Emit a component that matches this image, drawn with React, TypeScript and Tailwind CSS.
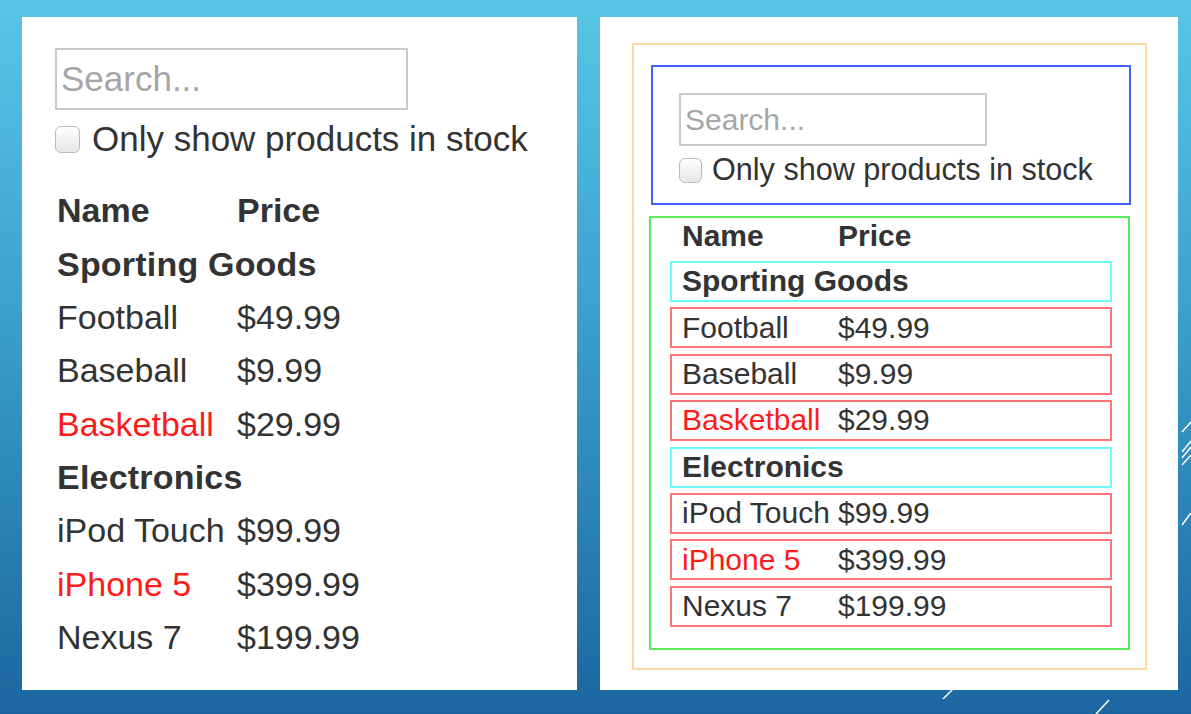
import React from "react";

type Product = { name: string; price: string; stocked: boolean };
type Group = { category: string; items: Product[] };

const groups: Group[] = [
    {
        category: "Sporting Goods",
        items: [
            { name: "Football", price: "$49.99", stocked: true },
            { name: "Baseball", price: "$9.99", stocked: true },
            { name: "Basketball", price: "$29.99", stocked: false },
        ],
    },
    {
        category: "Electronics",
        items: [
            { name: "iPod Touch", price: "$99.99", stocked: true },
            { name: "iPhone 5", price: "$399.99", stocked: false },
            { name: "Nexus 7", price: "$199.99", stocked: true },
        ],
    },
];

const font = { fontFamily: '"Liberation Sans", Arial, sans-serif' };

function Checkbox({ size }: { size: "lg" | "sm" }) {
    return (
        <div
            className={
                size === "lg"
                    ? "w-[25px] h-[27px] rounded-[6px] border border-[#b9b9b9] bg-[linear-gradient(to_bottom,#ffffff,#e6e6e6)] shadow-[inset_0_1px_1px_rgba(255,255,255,0.8)]"
                    : "w-[23px] h-[25px] rounded-[6px] border border-[#b9b9b9] bg-[linear-gradient(to_bottom,#ffffff,#e6e6e6)] shadow-[inset_0_1px_1px_rgba(255,255,255,0.8)]"
            }
        />
    );
}

function PlainPanel() {
    return (
        <div className="w-[555px] h-[673px] bg-white pl-[33px] pt-[31px] text-[#333]">
            <input
                readOnly
                placeholder="Search..."
                className="block w-[353px] h-[62px] border-2 border-[#c9c9c9] pl-[4px] text-[35px] outline-none placeholder:text-[#a6a6a6]"
                style={font}
            />
            <div className="mt-[14px] h-[30px] flex items-center gap-[12px]">
                <Checkbox size="lg" />
                <span className="text-[35px] leading-none -mt-[2px]">Only show products in stock</span>
            </div>
            <div className="mt-[30px] pl-[2px] grid grid-cols-[180px_1fr] text-[34px] leading-[1.15]">
                <div className="h-[53.4px] flex items-center font-bold">Name</div>
                <div className="h-[53.4px] flex items-center font-bold">Price</div>
                {groups.map((g) => (
                    <React.Fragment key={g.category}>
                        <div className="col-span-2 h-[53.4px] flex items-center font-bold tracking-[0.2px]">{g.category}</div>
                        {g.items.map((p) => (
                            <React.Fragment key={p.name}>
                                <div className={`h-[53.4px] flex items-center ${p.stocked ? "" : "text-[#ff1a1a]"}`}>
                                    {p.name}
                                </div>
                                <div className="h-[53.4px] flex items-center">{p.price}</div>
                            </React.Fragment>
                        ))}
                    </React.Fragment>
                ))}
            </div>
        </div>
    );
}

function OutlinedPanel() {
    return (
        <div className="w-[578px] h-[673px] bg-white pl-[32px] pt-[26px] text-[#333]">
            {/* FilterableProductTable */}
            <div className="w-[515px] h-[627px] border-2 border-[#ffd9a3] pl-[17px] pt-[20px]">
                {/* SearchBar */}
                <div className="w-[480px] h-[140px] border-2 border-[#4260ff] pl-[26px] pt-[26px]">
                    <input
                        readOnly
                        placeholder="Search..."
                        className="block w-[308px] h-[53px] border-2 border-[#c9c9c9] pl-[4px] text-[30px] outline-none placeholder:text-[#a6a6a6]"
                        style={font}
                    />
                    <div className="mt-[11px] h-[26px] flex items-center gap-[10px]">
                        <Checkbox size="sm" />
                        <span className="text-[30.6px] leading-none -mt-[1px]">Only show products in stock</span>
                    </div>
                </div>
                {/* ProductTable */}
                <div className="mt-[11px] -ml-[2px] w-[481px] h-[434px] border-2 border-[#5deb5d] pl-[19px] text-[30px] leading-[1.15]">
                    <div className="h-[36px] w-[442px] pl-[12px] grid grid-cols-[156px_1fr] items-center font-bold">
                        <div>Name</div>
                        <div>Price</div>
                    </div>
                    <div className="mt-[7px] flex flex-col gap-[5.4px]">
                        {groups.map((g) => (
                            <React.Fragment key={g.category}>
                                <div className="w-[442px] h-[41px] border-2 border-[#6cfbfb] pl-[10px] flex items-center font-bold">
                                    {g.category}
                                </div>
                                {g.items.map((p) => (
                                    <div
                                        key={p.name}
                                        className="w-[442px] h-[41px] border-2 border-[#ff7474] pl-[10px] grid grid-cols-[156px_1fr] items-center"
                                    >
                                        <div className={p.stocked ? "" : "text-[#ff1a1a]"}>{p.name}</div>
                                        <div>{p.price}</div>
                                    </div>
                                ))}
                            </React.Fragment>
                        ))}
                    </div>
                </div>
            </div>
        </div>
    );
}

export default function App() {
    return (
        <div
            className="relative w-[1191px] h-[714px] overflow-hidden bg-[linear-gradient(to_bottom,#58c6e6,#3a9fcd_45%,#1b66a0)] pt-[17px] pl-[22px] flex gap-[23px]"
            style={font}
        >
            <PlainPanel />
            <OutlinedPanel />
            {/* slide decoration strokes */}
            <svg className="absolute inset-0 pointer-events-none" width="1191" height="714">
                <g stroke="white" strokeWidth="1.5" fill="none">
                    <line x1="1182" y1="432" x2="1191" y2="422" />
                    <line x1="1182" y1="452" x2="1191" y2="441" />
                    <line x1="1182" y1="458" x2="1191" y2="447" />
                    <line x1="1182" y1="465" x2="1191" y2="455" />
                    <line x1="1182" y1="525" x2="1191" y2="513" />
                    <line x1="943" y1="699" x2="953" y2="689" />
                    <line x1="1096" y1="714" x2="1109" y2="700" />
                </g>
            </svg>
        </div>
    );
}
